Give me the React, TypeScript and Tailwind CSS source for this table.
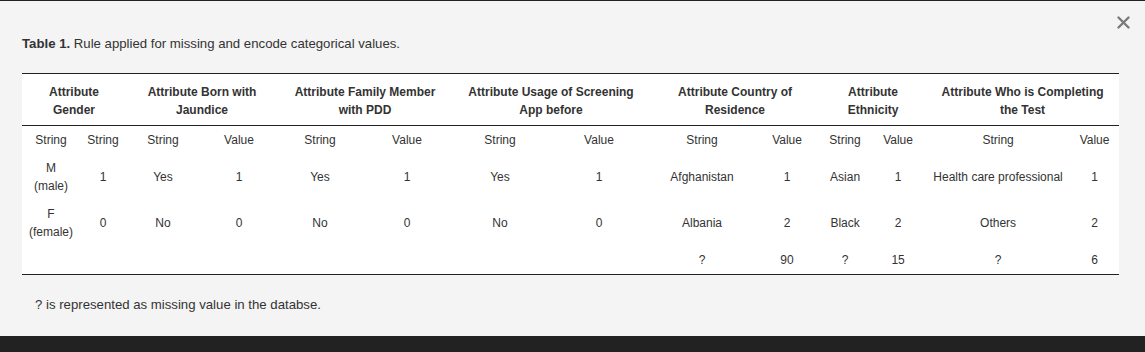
import React from "react";

const widths = [58, 46, 74, 78, 84, 90, 96, 102, 104, 66, 50, 56, 144, 49];

const groups = [
  ["Attribute", "Gender"],
  ["Attribute Born with", "Jaundice"],
  ["Attribute Family Member", "with PDD"],
  ["Attribute Usage of Screening", "App before"],
  ["Attribute Country of", "Residence"],
  ["Attribute", "Ethnicity"],
  ["Attribute Who is Completing", "the Test"],
];

const sub = ["String", "String", "String", "Value", "String", "Value", "String", "Value", "String", "Value", "String", "Value", "String", "Value"];

const rows: React.ReactNode[][] = [
  [
    <>
      M<br />(male)
    </>,
    "1", "Yes", "1", "Yes", "1", "Yes", "1", "Afghanistan", "1", "Asian", "1", "Health care professional", "1",
  ],
  [
    <>
      F<br />(female)
    </>,
    "0", "No", "0", "No", "0", "No", "0", "Albania", "2", "Black", "2", "Others", "2",
  ],
  ["", "", "", "", "", "", "", "", "?", "90", "?", "15", "?", "6"],
];

export default function App() {
  return (
    <div className="w-[1145px] h-[352px] flex flex-col bg-[#f4f4f4] font-['Liberation_Sans',Arial,sans-serif] text-[#333]">
      <div className="h-px bg-[#222]" />
      <div className="relative flex-1 px-[22px] pt-[34px]">
        <button className="absolute right-[15px] top-[15px] text-[#7a7a7a]">
          <svg width="13" height="13" viewBox="0 0 13 13">
            <path d="M1.5 1.5 L11.5 11.5 M11.5 1.5 L1.5 11.5" stroke="currentColor" strokeWidth="2.4" strokeLinecap="round" />
          </svg>
        </button>
        <p className="text-[13.2px] leading-[18px]">
          <b>Table 1.</b> Rule applied for missing and encode categorical values.
        </p>
        <table className="mt-[20px] w-[1097px] table-fixed border-collapse bg-white text-[12px] leading-[18px] border-t border-b border-[#222]">
          <colgroup>
            {widths.map((w, i) => (
              <col key={i} style={{ width: w }} />
            ))}
          </colgroup>
          <thead>
            <tr className="border-b border-[#222]">
              {groups.map((g, i) => (
                <th key={i} colSpan={2} className="pt-[9px] pb-[6px] text-center font-bold">
                  {g[0]}
                  <br />
                  {g[1]}
                </th>
              ))}
            </tr>
          </thead>
          <tbody>
            <tr>
              {sub.map((s, i) => (
                <td key={i} className="py-[5px] text-center">
                  {s}
                </td>
              ))}
            </tr>
            {rows.map((r, ri) => (
              <tr key={ri}>
                {r.map((c, ci) => (
                  <td key={ci} className="py-[5px] text-center align-middle whitespace-nowrap">
                    {c}
                  </td>
                ))}
              </tr>
            ))}
          </tbody>
        </table>
        <p className="mt-[21px] pl-[13px] text-[13.2px] leading-[18px]">? is represented as missing value in the databse.</p>
      </div>
      <div className="h-[16px] bg-[#222]" />
    </div>
  );
}
